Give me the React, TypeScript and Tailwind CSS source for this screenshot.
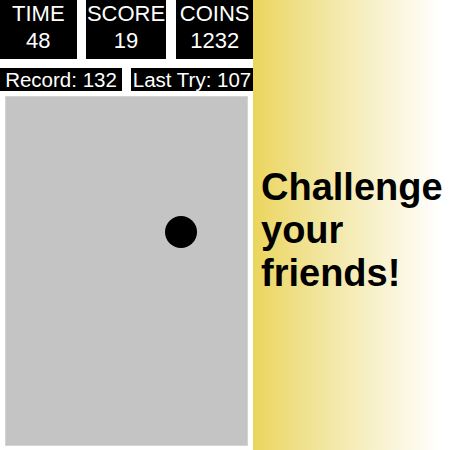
export default function App() {
  return (
    <div className="flex w-[450px] h-[450px] bg-white font-['Liberation_Sans',Arial,sans-serif]">
      <div className="flex flex-col w-[253px] shrink-0">
        <div className="flex gap-[9px] h-[59px]">
          <div className="w-[77px] bg-black text-white text-[22px] leading-[27px] flex flex-col items-center">
            <span>TIME</span>
            <span>48</span>
          </div>
          <div className="w-[81px] bg-black text-white text-[22px] leading-[27px] flex flex-col items-center">
            <span>SCORE</span>
            <span>19</span>
          </div>
          <div className="w-[77px] ml-px bg-black text-white text-[22px] leading-[27px] flex flex-col items-center">
            <span>COINS</span>
            <span>1232</span>
          </div>
        </div>
        <div className="flex gap-[9px] h-[23px] mt-[9px]">
          <div className="w-[122px] bg-black text-white text-[20.5px] leading-[23px] text-center">Record: 132</div>
          <div className="w-[122px] bg-black text-white text-[20.5px] leading-[23px] text-center">Last Try: 107</div>
        </div>
        <div className="relative mx-[5px] mt-[5px] h-[350px] bg-[#c4c4c4] border border-[#d4d4d4]">
          <div className="absolute left-[159px] top-[119px] w-[32px] h-[32px] rounded-full bg-black" />
        </div>
      </div>
      <div className="flex-1 flex items-center pl-[8px] bg-gradient-to-r from-[#ebd55b] to-white to-[96%]">
        <p className="text-[38px] leading-[43px] font-bold text-black mt-[10px]">
          Challenge
          <br />
          your
          <br />
          friends!
        </p>
      </div>
    </div>
  );
}
